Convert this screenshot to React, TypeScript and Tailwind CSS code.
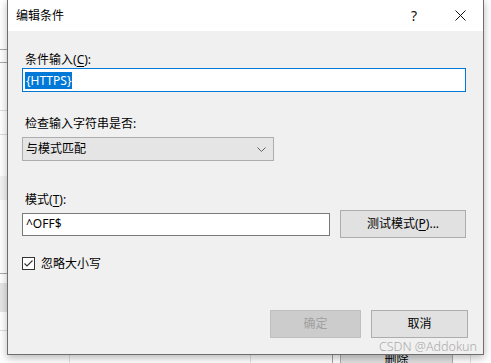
import React from "react";

const font = {
  fontFamily:
    '"Segoe UI", "Noto Sans", "Noto Sans CJK SC", "Microsoft YaHei", sans-serif',
};

function Backdrop() {
  // what shows of the main window behind the dialog
  return (
    <>
      <div className="absolute left-0 top-[49px] w-[8px] h-px bg-[#a8a8a8]" />
      <div className="absolute left-0 top-[62px] w-[8px] h-px bg-[#a8a8a8]" />
      <div className="absolute left-0 top-[110px] w-[8px] h-px bg-[#dedede]" />
      <div className="absolute left-0 top-[134px] w-[8px] h-px bg-[#dedede]" />
      <div className="absolute left-0 top-[176px] w-[8px] h-[24px] bg-[#f3f3f3]" />
      <div className="absolute left-0 top-[273px] w-[8px] h-px bg-[#a8a8a8]" />
      <div className="absolute left-0 top-[283px] w-[8px] h-[29px] bg-[#e6e6e6]" />
      <div className="absolute left-0 top-[330px] w-[8px] h-px bg-[#dedede]" />
      <div className="absolute left-[69px] top-[350px] w-px h-[13px] bg-[#e0e0e0]" />
      <div className="absolute left-[250px] top-[350px] w-px h-[13px] bg-[#e0e0e0]" />
      <div className="absolute left-[332px] top-[350px] w-px h-[13px] bg-[#a0a0a0]" />
      <div className="absolute left-[470px] top-[350px] w-px h-[13px] bg-[#e0e0e0]" />
      <div className="absolute left-[340px] top-[346px] w-[113px] h-[28px] bg-[#e1e1e1] border border-[#adadad] flex items-center justify-center text-[12px] text-black">
        删除
      </div>
    </>
  );
}

function CloseIcon() {
  return (
    <svg width="11" height="11" viewBox="0 0 11 11">
      <path d="M0.5 0.5 L10.5 10.5 M10.5 0.5 L0.5 10.5" stroke="#111" strokeWidth="1" />
    </svg>
  );
}

function Chevron() {
  return (
    <svg width="9" height="5" viewBox="0 0 9 5">
      <path d="M0.5 0.5 L4.5 4.5 L8.5 0.5" stroke="#606060" strokeWidth="1" fill="none" />
    </svg>
  );
}

function Check() {
  return (
    <svg width="13" height="13" viewBox="0 0 13 13">
      <rect x="0.5" y="0.5" width="12" height="12" fill="#fff" stroke="#333" />
      <path d="M2.5 6.5 L5 9 L10.5 3.5" stroke="#333" strokeWidth="1.1" fill="none" />
    </svg>
  );
}

function Label({ text, mnemonic }: { text: string; mnemonic: string }) {
  return (
    <div className="ml-[3px] h-[16px] leading-[16px] text-[12px] text-black">
      {text}(<span className="underline underline-offset-2">{mnemonic}</span>):
    </div>
  );
}

export default function App() {
  return (
    <div
      className="relative w-[491px] h-[363px] overflow-hidden bg-white"
      style={font}
    >
      <Backdrop />

      <div className="absolute left-[7px] top-[-1px] w-[477px] h-[356px] border border-[#6e6e6e] bg-[#f0f0f0] shadow-[0_3px_8px_rgba(0,0,0,0.28)] flex flex-col">
        <div className="h-[31px] bg-white flex items-center">
          <div className="pl-[8px] flex-1 text-[12px] text-black pt-px">编辑条件</div>
          <div className="w-[46px] h-full flex items-center justify-center text-[14px] text-[#111]">
            ?
          </div>
          <div className="w-[46px] h-full flex items-center justify-center">
            <CloseIcon />
          </div>
        </div>

        <div className="flex flex-col pl-[14px] pr-[17px]">
          <div className="mt-[21px]">
            <Label text="条件输入" mnemonic="C" />
          </div>
          <div className="h-[24px] border border-[#0078d7] bg-white flex items-center pl-[2px]">
            <span className="bg-[#0078d7] text-white text-[12px] leading-[17px] px-px">
              {"{HTTPS}"}
            </span>
          </div>

          <div className="mt-[24px] ml-[3px] h-[16px] leading-[16px] text-[12px] text-black">
            检查输入字符串是否:
          </div>
          <div className="mt-[5px] w-[252px] h-[24px] border border-[#adadad] bg-[#e5e5e5] flex items-center justify-between pl-[3px] pr-[7px] text-[12px] text-black">
            <span>与模式匹配</span>
            <Chevron />
          </div>

          <div className="mt-[31px]">
            <Label text="模式" mnemonic="T" />
          </div>
          <div className="mt-[2px] flex items-center justify-between h-[28px]">
            <div className="w-[308px] h-[23px] border border-[#7a7a7a] bg-white flex items-center pl-[3px] text-[12px] text-black">
              ^OFF$
            </div>
            <div className="w-[126px] h-[28px] border border-[#adadad] bg-[#e1e1e1] flex items-center justify-center text-[12px] text-black">
              测试模式(<span className="underline underline-offset-2">P</span>)...
            </div>
          </div>

          <div className="mt-[19px] flex items-center gap-[6px] h-[13px]">
            <Check />
            <span className="text-[12px] text-black">忽略大小写</span>
          </div>
        </div>

        <div className="mt-[40px] flex justify-end gap-[10px] pr-[15px]">
          <div className="w-[91px] h-[28px] border border-[#bfbfbf] bg-[#cccccc] flex items-center justify-center text-[12px] text-[#a0a0a0]">
            确定
          </div>
          <div className="w-[97px] h-[28px] border border-[#adadad] bg-[#e1e1e1] flex items-center justify-center text-[12px] text-black">
            取消
          </div>
        </div>
      </div>

      <div
        className="absolute left-[379px] top-[339px] whitespace-nowrap text-[12.5px] leading-[15px] text-[#aaaaaa] font-light"
      >
        CSDN @Addokun
      </div>
    </div>
  );
}
